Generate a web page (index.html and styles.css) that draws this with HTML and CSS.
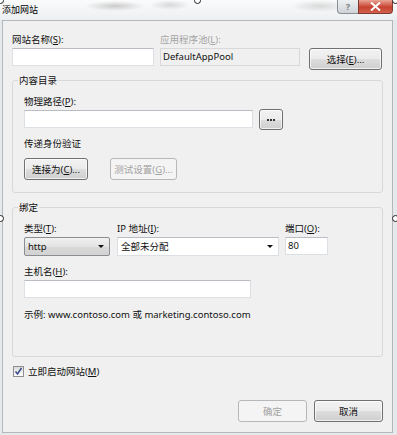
FILE: index.html
```html
<!DOCTYPE html>
<html lang="zh-CN">
<head>
  <meta charset="UTF-8" />
  <title>添加网站</title>
  <link rel="stylesheet" href="styles.css">
</head>
<body>
  <div class="window">
    <!-- Title bar -->
    <div class="titlebar">
      <span class="title">添加网站</span>
      <div class="caption-btns">
        <span class="cap-help">?</span>
        <span class="cap-close">
          <svg width="11" height="9" viewBox="0 0 11 9"><path d="M1 0.5 L10 8.5 M10 0.5 L1 8.5" stroke="#fff" stroke-width="2"/></svg>
        </span>
      </div>
    </div>

    <!-- Dialog body -->
    <div class="dialog">
      <div class="top-row">
        <div class="field">
          <div class="label">网站名称(<u>S</u>):</div>
          <div class="input"></div>
        </div>
        <div class="field">
          <div class="label disabled">应用程序池(<u>L</u>):</div>
          <div class="input readonly">DefaultAppPool</div>
        </div>
        <div class="field field-btn">
          <button class="btn">选择(<u>E</u>)...</button>
        </div>
      </div>

      <fieldset class="group group-content">
        <legend>内容目录</legend>
        <div class="label">物理路径(<u>P</u>):</div>
        <div class="path-row">
          <div class="input path-input"></div>
          <button class="btn btn-dots"><span class="dots"><i></i><i></i><i></i></span></button>
        </div>
        <div class="label pass-label">传递身份验证</div>
        <div class="btn-row">
          <button class="btn btn-connect">连接为(<u>C</u>)...</button>
          <button class="btn btn-test" disabled>测试设置(<u>G</u>)...</button>
        </div>
      </fieldset>

      <fieldset class="group group-binding">
        <legend>绑定</legend>
        <div class="binding-row">
          <div class="field">
            <div class="label">类型(<u>T</u>):</div>
            <div class="select select-type">http<span class="arrow"></span></div>
          </div>
          <div class="field">
            <div class="label">IP 地址(<u>I</u>):</div>
            <div class="select select-ip">全部未分配<span class="arrow"></span></div>
          </div>
          <div class="field">
            <div class="label">端口(<u>O</u>):</div>
            <div class="input port-input">80</div>
          </div>
        </div>
        <div class="label host-label">主机名(<u>H</u>):</div>
        <div class="input host-input"></div>
        <div class="example">示例: www.contoso.com 或 marketing.contoso.com</div>
      </fieldset>

      <div class="check-row">
        <span class="checkbox">
          <svg width="9" height="9" viewBox="0 0 9 9"><path d="M1.5 4.5 L3.5 7 L7.5 1" fill="none" stroke="#3c4f8a" stroke-width="1.6"/></svg>
        </span>
        <span class="check-label">立即启动网站(<u>M</u>)</span>
      </div>

      <div class="footer">
        <button class="btn btn-footer" disabled>确定</button>
        <button class="btn btn-footer">取消</button>
      </div>
    </div>

    <!-- selection handles over the picture -->
    <span class="handle h-tl"></span>
    <span class="handle h-tm"></span>
    <span class="handle h-tr"></span>
    <span class="handle h-ml"></span>
    <span class="handle h-mr"></span>
  </div>
</body>
</html>
```

FILE: styles.css
```css
/* Reset & Base */
*, *::before, *::after { box-sizing: border-box; margin: 0; padding: 0; }
html, body { background: #fff; }
body { font-family: "Noto Sans", "Noto Sans CJK SC", sans-serif; font-size: 9.5px; color: #111; }
u { text-decoration: underline; text-underline-offset: 1px; }
button { font: inherit; color: inherit; cursor: pointer; }

/* Window frame */
.window { position: relative; width: 397px; height: 435px; display: flex; flex-direction: column; background: #e6e9ec; overflow: hidden; }
.titlebar {
  height: 20px; display: flex; align-items: flex-start; padding: 0 4px 0 2px;
  background:
    radial-gradient(ellipse 30px 5px at 115px 6px, rgba(120,120,120,0.35), transparent),
    radial-gradient(ellipse 20px 5px at 170px 5px, rgba(120,120,120,0.25), transparent),
    radial-gradient(ellipse 30px 6px at 320px 6px, rgba(150,150,150,0.3), transparent),
    linear-gradient(#fbfbfc, #eceff1);
}
.title { line-height: 20px; font-size: 9px; color: #000; }
.caption-btns { margin-left: auto; display: flex; }
.cap-help, .cap-close { height: 14px; display: flex; align-items: center; justify-content: center; border: 1px solid #8b8f95; border-top: none; }
.cap-help { width: 21px; border-radius: 0 0 0 4px; border-right: none; background: linear-gradient(#eef0f2, #cfd3d8); color: #7a7f86; font-size: 9px; font-weight: 700; }
.cap-close { width: 35px; border-radius: 0 0 4px 0; border-color: #7d3a33; background: linear-gradient(#e9a596, #c8412f 55%, #d0614f); }

/* Dialog */
.dialog {
  flex: 1; display: flex; flex-direction: column;
  margin: 0 4px 2px 2px; padding: 12px 9px 10px 9px;
  background: #f0f0f0; border: 1px solid #b4b7bb;
}
.label { line-height: 13px; margin-bottom: 2px; white-space: nowrap; }
.disabled { color: #a5a5a5; }
.input { height: 18px; background: #fff; border: 1px solid #dcdfe3; border-top-color: #b9bdc3; line-height: 16px; padding-left: 2px; }
.input.readonly { background: #f0f0f0; border-color: #d9d9d9; }

.btn {
  height: 22px; border: 1px solid #707070; border-radius: 3px;
  background: linear-gradient(#f2f2f2, #ebebeb 50%, #dddddd 51%, #cfcfcf);
  box-shadow: inset 0 0 0 1px rgba(255,255,255,0.7); white-space: nowrap;
}
.btn:disabled { border-color: #b5b8bb; background: #f4f4f4; color: #a3a3a3; box-shadow: none; }

/* Top row */
.top-row { display: grid; grid-template-columns: 142px 140px 73px; column-gap: 6px; align-items: end; }
.top-row .field-btn { margin-left: 3px; }
.top-row .field-btn .btn { width: 73px; margin-bottom: -4px; }

/* Group boxes */
.group { border: 1px solid #d6d9dc; border-radius: 3px; padding: 8px 11px 12px 11px; }
.group legend { line-height: 13px; padding: 0 1px; margin-left: -6px; }
.group-content { margin-top: 8px; }
.path-row { display: flex; gap: 6px; align-items: flex-start; margin-top: 1px; }
.path-input { width: 229px; }
.btn-dots { width: 24px; height: 21px; margin-top: -1px; display: flex; align-items: center; justify-content: center; }
.dots { display: flex; gap: 1px; }
.dots i { width: 2px; height: 2px; background: #333; }
.pass-label { margin-top: 7px; }
.btn-row { display: flex; gap: 22px; margin-top: 8px; }
.btn-connect { width: 64px; }
.btn-test { width: 67px; }

.group-binding { margin-top: 8px; padding-top: 8px; padding-bottom: 35px; }
.binding-row { display: grid; grid-template-columns: 86px 162px 43px; column-gap: 7px; }
.binding-row .field:last-child { margin-left: -1px; }
.select { position: relative; height: 19px; line-height: 17px; padding-left: 3px; border: 1px solid #a5a8ac; }
.select-type { border-color: #8a8d91; border-radius: 2px; background: linear-gradient(#f1f1f1, #e3e3e3 50%, #d9d9d9 51%, #d2d2d2); }
.select-ip { background: #fff; border-color: #dcdfe3; border-top-color: #b9bdc3; }
.arrow { position: absolute; right: 5px; top: 7px; width: 0; height: 0; border-left: 3px solid transparent; border-right: 3px solid transparent; border-top: 3px solid #111; }
.port-input { width: 43px; }
.host-label { margin-top: 9px; }
.host-input { width: 227px; margin-top: 1px; }
.example { line-height: 13px; margin-top: 10px; }

/* Checkbox */
.check-row { display: flex; align-items: center; gap: 4px; margin-top: 8px; padding-left: 1px; height: 12px; }
.checkbox { width: 11px; height: 11px; border: 1px solid #8e8f8f; background: linear-gradient(#dcdcdc, #fff); display: flex; align-items: center; justify-content: center; }

/* Footer */
.footer { margin-top: auto; display: flex; justify-content: flex-end; gap: 7px; }
.btn-footer { width: 69px; }

/* Selection handles */
.handle { position: absolute; width: 7px; height: 7px; border: 1px solid #222; border-radius: 50%; background: #fff; }
.h-tl { left: -3px; top: -3px; }
.h-tm { left: 194px; top: -3px; }
.h-tr { left: 392px; top: -3px; }
.h-ml { left: -3px; top: 215px; }
.h-mr { left: 392px; top: 215px; }
```
